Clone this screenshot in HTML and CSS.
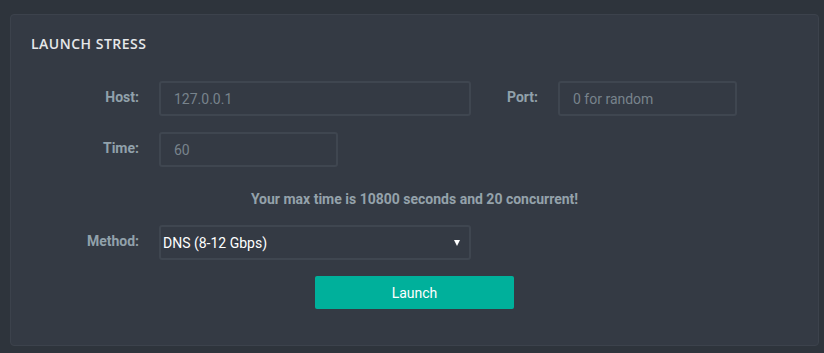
FILE: index.html
```html
<html>
    <head>
        <link rel="stylesheet" href="styles.css">
    </head>
    <body>
        <div class="panel">
            <div class="panelTitle">LAUNCH STRESS</div>
            <div class="stressForm">
                <div class="formRow">
                    <label class="formLabel">Host:</label>
                    <input class="formInput wideInput" type="text" placeholder="127.0.0.1">
                    <label class="formLabel portLabel">Port:</label>
                    <input class="formInput shortInput" type="text" placeholder="0 for random">
                </div>
                <div class="formRow">
                    <label class="formLabel">Time:</label>
                    <input class="formInput shortInput" type="text" placeholder="60">
                </div>
                <div class="maxInfo">Your max time is 10800 seconds and 20 concurrent!</div>
                <div class="formRow">
                    <label class="formLabel">Method:</label>
                    <div class="formSelect wideInput">
                        <span>DNS (8-12 Gbps)</span>
                        <span class="selectArrow"></span>
                    </div>
                </div>
                <div class="buttonRow">
                    <button class="launchButton">Launch</button>
                </div>
            </div>
        </div>
    </body>
</html>
```

FILE: styles.css
```css
body {
  margin: 0;
  background: #2e343c;
  font-family: Roboto, "Liberation Sans", sans-serif;
  padding: 14px 5px 0 10px;
}
.panel {
  background: #343a44;
  border: 1px solid #3c424c;
  border-radius: 4px;
  padding: 20px 20px 35px 20px;
  height: 275px;
}
.panelTitle {
  font-family: "Open Sans", sans-serif;
  font-weight: 600;
  font-size: 14px;
  line-height: 18px;
  color: #e6e8ea;
  letter-spacing: 0.5px;
}
.stressForm {
  margin-top: 28px;
}
.formRow {
  display: flex;
  align-items: center;
  margin-bottom: 16px;
}
.formLabel {
  width: 108px;
  margin-right: 20px;
  text-align: right;
  font-weight: bold;
  font-size: 14px;
  color: #91a1ab;
  padding-bottom: 4px;
}
.portLabel {
  width: 67px;
}
.formInput {
  box-sizing: border-box;
  height: 35px;
  background: #343a44;
  border: 2px solid #3f4650;
  border-radius: 3px;
  padding: 0 13px;
  font-family: Roboto, sans-serif;
  font-size: 14px;
  color: #c8ced3;
  outline: none;
}
.formInput::placeholder {
  color: #78838c;
}
.wideInput {
  width: 312px;
}
.shortInput {
  width: 179px;
}
.formSelect {
  box-sizing: border-box;
  height: 35px;
  border: 2px solid #3f4650;
  border-radius: 3px;
  padding: 0 9px 0 2px;
  display: flex;
  align-items: center;
  justify-content: space-between;
  font-size: 14px;
  color: #ffffff;
}
.selectArrow {
  width: 0;
  height: 0;
  border-left: 3px solid transparent;
  border-right: 3px solid transparent;
  border-top: 6px solid #ffffff;
}
.maxInfo {
  text-align: center;
  font-weight: bold;
  font-size: 14px;
  line-height: 20px;
  color: #94a2ab;
  margin: 22px 0 16px 0;
}
.buttonRow {
  display: flex;
  justify-content: center;
}
.launchButton {
  width: 199px;
  height: 33px;
  background: #00b09b;
  border: none;
  border-radius: 2px;
  color: #ffffff;
  font-family: Roboto, sans-serif;
  font-size: 14px;
}
```
